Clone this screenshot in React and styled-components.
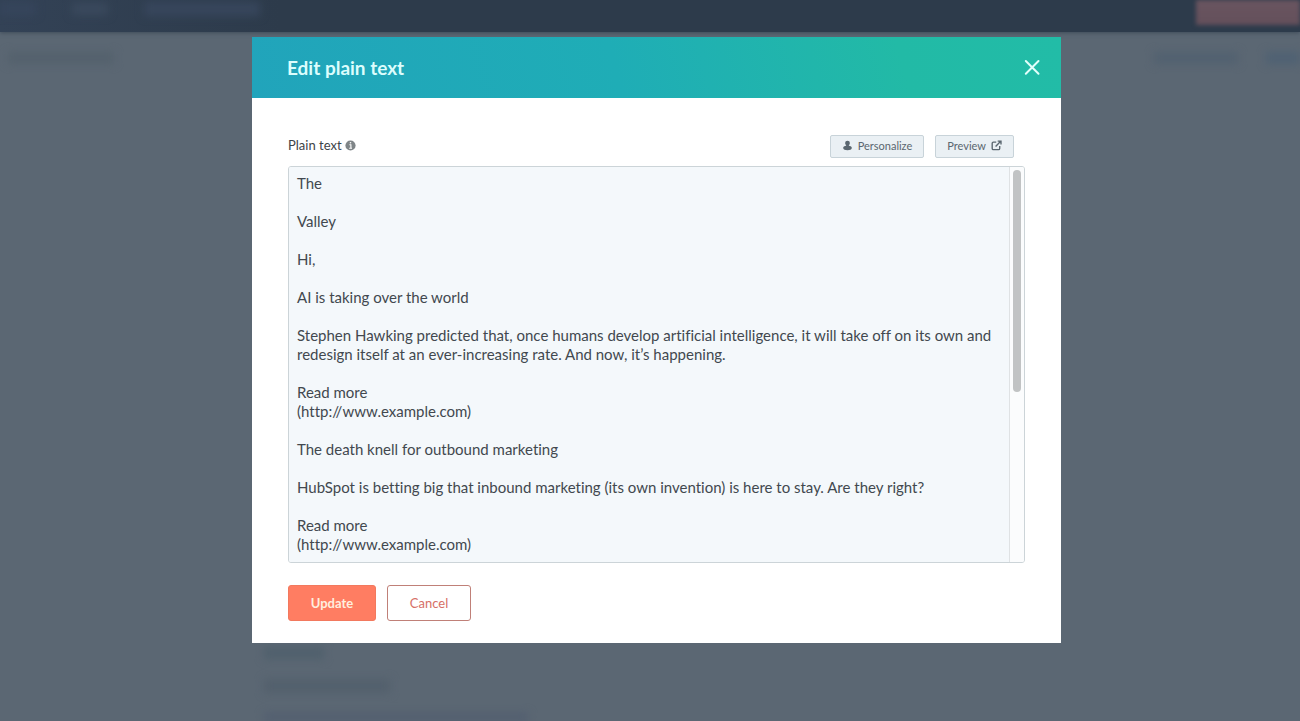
import React from "react";
import styled, { createGlobalStyle } from "styled-components";

const GlobalStyle = createGlobalStyle`
  *, *::before, *::after { box-sizing: border-box; }
  body {
    margin: 0;
    background: #5b6773;
    font-family: Lato, "Liberation Sans", sans-serif;
    font-variant-ligatures: none;
    color: #42484f;
    overflow: hidden;
  }
  button, textarea { font-family: inherit; font-variant-ligatures: none; margin: 0; }
`;

const Page = styled.div`
  display: grid;
  min-height: 100vh;
  overflow: hidden;
`;

const Backdrop = styled.div`
  grid-area: 1 / 1;
  display: flex;
  flex-direction: column;
  height: 100vh;
`;

const TopBar = styled.div`
  display: flex;
  justify-content: space-between;
  align-items: flex-start;
  height: 32px;
  background: linear-gradient(90deg, #334256 0, #2d3b4b 280px);
  box-shadow: 0 1px 4px #3f4c5a;
`;

const Cluster = styled.div`
  display: flex;
  align-items: center;
  gap: ${(p) => p.$gap || 24}px;
  padding: ${(p) => p.$pad || "0"};
  filter: blur(4px);
`;

const Smudge = styled.span`
  width: ${(p) => p.$w}px;
  height: ${(p) => p.$h || 12}px;
  background: ${(p) => p.$c || "#51606f"};
`;

const PublishShade = styled.span`
  width: 104px;
  height: 25px;
  background: linear-gradient(180deg, #6a5560, #64505b);
  filter: blur(2px);
`;

const SubBar = styled.div`
  display: flex;
  justify-content: space-between;
  flex: 1;
  align-items: flex-start;
`;

const LowerContent = styled.div`
  display: flex;
  flex-direction: column;
  gap: 20px;
  padding: 0 264px;
  filter: blur(4px);
`;

const Overlay = styled.div`
  grid-area: 1 / 1;
  z-index: 1;
  display: flex;
  justify-content: center;
  align-items: flex-start;
  padding: 37px 0 37px 13px;
`;

const Dialog = styled.section`
  width: 100%;
  max-width: 809px;
  background: #fff;
`;

const DialogHeader = styled.header`
  display: flex;
  align-items: center;
  justify-content: space-between;
  height: 61px;
  padding: 0 12px 0 35px;
  background: linear-gradient(75deg, #21a4bb 0%, #1fadb6 45%, #22baa6 80%, #22bca7 100%);
`;

const Title = styled.h1`
  margin: 0;
  font-size: 19px;
  line-height: 24px;
  font-weight: 700;
  color: #dcfdfd;
`;

const CloseButton = styled.button`
  display: flex;
  padding: 8px;
  border: 0;
  background: none;
  color: #e2fffb;
  cursor: pointer;
`;

const DialogBody = styled.div`
  padding: 37px 36px 22px;
`;

const FieldHeader = styled.div`
  display: flex;
  justify-content: space-between;
  align-items: flex-start;
  padding-right: 11px;
  margin-bottom: 8px;
`;

const LabelGroup = styled.div`
  display: flex;
  align-items: center;
  gap: 3px;
  height: 20px;
  color: #7f8588;
`;

const Label = styled.label`
  font-size: 13px;
  line-height: 20px;
  color: #3d4348;
`;

const Tools = styled.div`
  display: flex;
  gap: 11px;
`;

const ToolButton = styled.button`
  display: flex;
  align-items: center;
  gap: 5px;
  height: 23px;
  padding: 0 11px 2px;
  border: 1px solid #c8d3d9;
  border-radius: 2px;
  background: #eaf0f4;
  color: #5b6770;
  font-size: 11px;
  line-height: 16px;
  cursor: pointer;
`;

const TextFrame = styled.div`
  display: flex;
  height: 397px;
  border: 1px solid #ccd4d8;
  border-radius: 3px;
  overflow: hidden;
`;

const TextArea = styled.textarea`
  flex: 1;
  min-width: 0;
  padding: 7px 8px;
  border: 0;
  outline: 0;
  resize: none;
  scrollbar-width: none;
  background: #f4f8fb;
  color: #42484f;
  font-size: 15px;
  line-height: 19px;
`;

const ScrollTrack = styled.div`
  width: 15px;
  padding: 3px 2px 3px 3px;
  background: #fbfcfd;
  border-left: 1px solid #dfe2e4;
`;

const ScrollThumb = styled.div`
  width: 8px;
  height: 57%;
  border-radius: 4px;
  background: #c1c3c4;
`;

const Actions = styled.div`
  display: flex;
  gap: 11px;
  margin-top: 22px;
`;

const ActionButton = styled.button`
  height: 36px;
  padding: 0 21px 1px;
  border: 1px solid ${(p) => (p.$primary ? "#f2795e" : "#c08078")};
  border-radius: 3px;
  background: ${(p) => (p.$primary ? "#ff7d62" : "#fff")};
  color: ${(p) => (p.$primary ? "#ffeede" : "#d66f66")};
  font-size: 13px;
  line-height: 20px;
  min-width: ${(p) => (p.$primary ? 88 : 84)}px;
  font-weight: ${(p) => (p.$primary ? 700 : 400)};
  cursor: pointer;
`;

const CloseIcon = () => (
  <svg width="18" height="18" viewBox="0 0 18 18" fill="none" stroke="currentColor" strokeWidth="2" strokeLinecap="round" aria-hidden="true">
    <path d="M2.800 2l12.700 12.700M15.500 2L2.800 14.700" />
  </svg>
);

const InfoIcon = () => (
  <svg width="11" height="11" viewBox="0 0 11 11" aria-hidden="true">
    <circle cx="5.5" cy="5.5" r="5.1" fill="currentColor" />
    <path d="M4.4 4.700h1.500v3.400M4.200 8.300h2.800" stroke="#fff" strokeWidth="1.100" fill="none" />
    <circle cx="5.5" cy="2.7" r="0.8" fill="#fff" />
  </svg>
);

const PersonIcon = () => (
  <svg width="11" height="11" viewBox="0 0 12 12" fill="currentColor" aria-hidden="true">
    <path d="M6 .8a2.600 2.600 0 0 1 2.600 2.600c0 1-.4 1.800-1.100 2.300v.7c1.900.3 3.200 1 3.200 2.300 0 1.600-2.200 2.400-4.700 2.400s-4.700-.8-4.700-2.400c0-1.300 1.300-2 3.200-2.300v-.7c-.7-.5-1.100-1.300-1.100-2.300A2.600 2.600 0 0 1 6 .8z" />
  </svg>
);

const ExternalIcon = () => (
  <svg width="11" height="11" viewBox="0 0 12 12" fill="none" stroke="currentColor" strokeWidth="1.500" aria-hidden="true">
    <path d="M5.700 2.300H2.600q-1.300 0-1.300 1.300v5.600q0 1.300 1.300 1.300h5.600q1.300 0 1.300-1.300V6.600" />
    <path d="M5 7l5.300-5.300M7.300 1.200h3.600v3.600" />
  </svg>
);

const plainText = `The

Valley

Hi,

AI is taking over the world

Stephen Hawking predicted that, once humans develop artificial intelligence, it will take off on its own and redesign itself at an ever-increasing rate. And now, it’s happening.

Read more
(http://www.example.com)

The death knell for outbound marketing

HubSpot is betting big that inbound marketing (its own invention) is here to stay. Are they right?

Read more
(http://www.example.com)
${"\n".repeat(15)}`;

export default function App() {
  return (
    <>
      <GlobalStyle />
      <Page>
        <Backdrop aria-hidden="true">
          <TopBar>
            <Cluster $gap={36} $pad="2px 0 0 0">
              <Smudge $w={36} $c="#36455c" />
              <Smudge $w={36} $c="#3a495d" />
              <Smudge $w={116} $h={14} $c="#37465c" />
            </Cluster>
            <PublishShade />
          </TopBar>
          <SubBar>
            <Cluster $pad="20px 0 0 8px">
              <Smudge $w={106} $c="#54616d" />
            </Cluster>
            <Cluster $gap={28} $pad="20px 0 0 0">
              <Smudge $w={84} $c="#526170" />
              <Smudge $w={34} $c="#4f6173" />
            </Cluster>
          </SubBar>
          <LowerContent>
            <Smudge $w={60} $h={12} $c="#50606d" />
            <Smudge $w={126} $h={14} $c="#53606d" />
            <Smudge $w={264} $h={8} $c="#525e70" />
          </LowerContent>
        </Backdrop>
        <Overlay>
          <Dialog role="dialog" aria-modal="true" aria-labelledby="dialog-title">
            <DialogHeader>
              <Title id="dialog-title">Edit plain text</Title>
              <CloseButton type="button" aria-label="Close">
                <CloseIcon />
              </CloseButton>
            </DialogHeader>
            <DialogBody>
              <FieldHeader>
                <LabelGroup>
                  <Label htmlFor="plain-text">Plain text</Label>
                  <InfoIcon />
                </LabelGroup>
                <Tools>
                  <ToolButton type="button">
                    <PersonIcon />
                    Personalize
                  </ToolButton>
                  <ToolButton type="button">
                    Preview
                    <ExternalIcon />
                  </ToolButton>
                </Tools>
              </FieldHeader>
              <TextFrame>
                <TextArea id="plain-text" spellCheck={false} defaultValue={plainText} />
                <ScrollTrack aria-hidden="true">
                  <ScrollThumb />
                </ScrollTrack>
              </TextFrame>
              <Actions>
                <ActionButton type="button" $primary>Update</ActionButton>
                <ActionButton type="button">Cancel</ActionButton>
              </Actions>
            </DialogBody>
          </Dialog>
        </Overlay>
      </Page>
    </>
  );
}
